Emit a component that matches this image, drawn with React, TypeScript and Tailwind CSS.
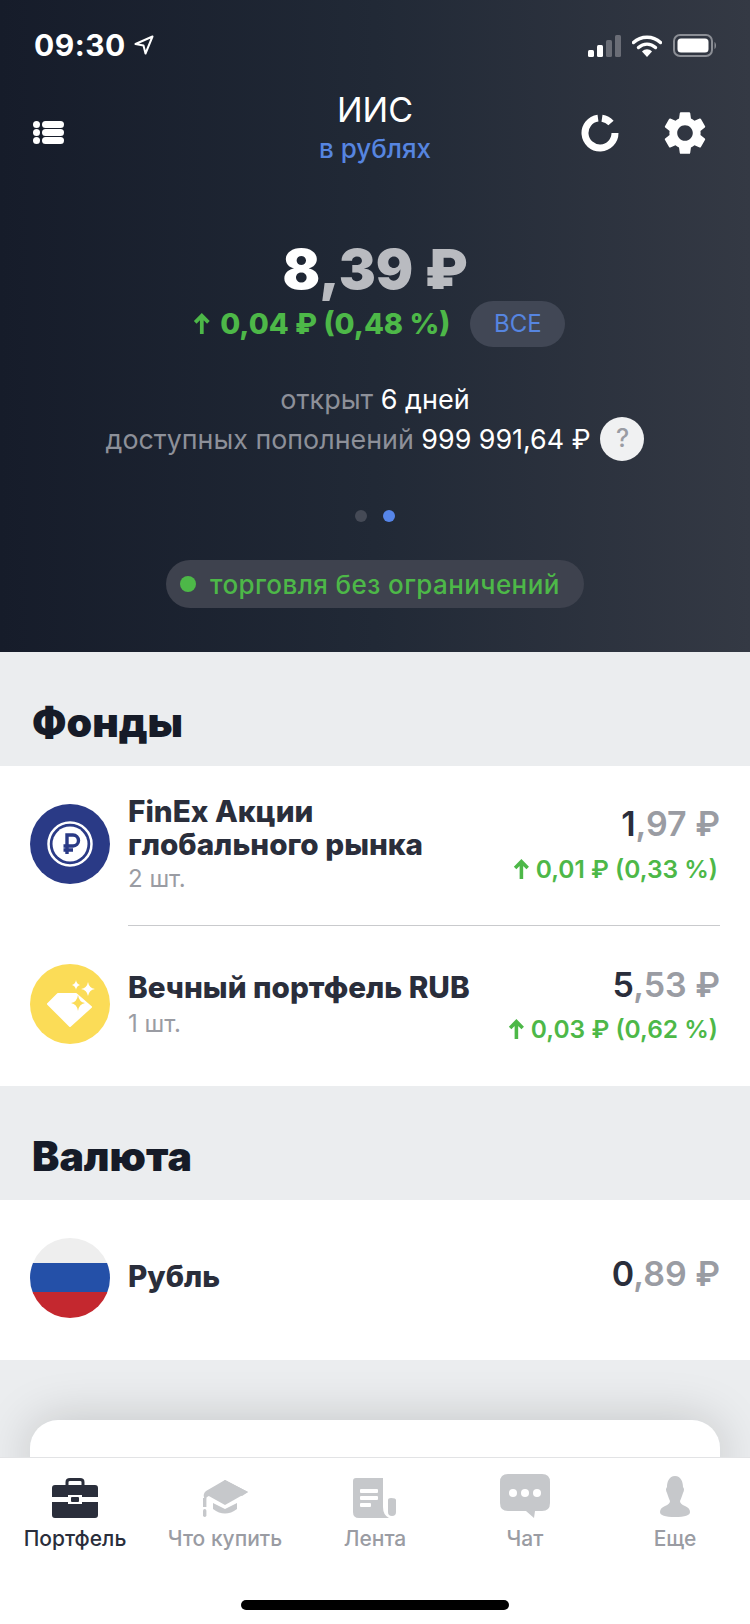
import { MdSettings } from "react-icons/md";

const FONT = "font-['Inter','Noto_Sans',sans-serif]";

function StatusBar() {
  return (
    <div className="flex h-[90px] items-start justify-between pl-[34px] pr-[33px] pt-[31px]">
      <div className="flex items-center gap-[8px]">
        <span className="text-[30px] font-bold leading-[28px] tracking-[0.5px] text-white">09:30</span>
        <svg width="20" height="20" viewBox="0 0 20 20" fill="none">
          <path d="M18.5 1.5 L1.5 9 L9.5 10.5 L11.5 18.5 Z" stroke="white" strokeWidth="2" strokeLinejoin="round" />
        </svg>
      </div>
      <div className="flex items-center gap-[11px] pt-[3px]">
        <svg width="33" height="22" viewBox="0 0 33 22">
          <rect x="0" y="15" width="6" height="7" rx="1.5" fill="white" />
          <rect x="9" y="10" width="6" height="12" rx="1.5" fill="white" />
          <rect x="18" y="5" width="6" height="17" rx="1.5" fill="#6a6d76" />
          <rect x="27" y="0" width="6" height="22" rx="1.5" fill="#6a6d76" />
        </svg>
        <svg width="30" height="22" viewBox="0 0 30 22" fill="none">
          <path d="M1.5 7.5 C9 0.5 21 0.5 28.5 7.5" stroke="white" strokeWidth="3.4" strokeLinecap="round" />
          <path d="M6.5 12.5 C11.5 8 18.5 8 23.5 12.5" stroke="white" strokeWidth="3.4" strokeLinecap="round" />
          <path d="M10 16.5 C13 13.5 17 13.5 20 16.5 L15 22 Z" fill="white" />
        </svg>
        <svg width="44" height="23" viewBox="0 0 44 23" fill="none">
          <rect x="1" y="1" width="38" height="21" rx="6" stroke="#8b8e95" strokeWidth="2" />
          <rect x="4.5" y="4.5" width="31" height="14" rx="3.5" fill="white" />
          <path d="M41.5 8 C43.5 9 43.5 14 41.5 15 Z" fill="#8b8e95" />
        </svg>
      </div>
    </div>
  );
}

function TopBar() {
  return (
    <div className="relative flex h-[70px] items-start justify-between">
      <svg className="ml-[33px] mt-[31px]" width="31" height="23" viewBox="0 0 31 23" fill="white">
        <circle cx="3.5" cy="3.5" r="3.5" />
        <circle cx="3.5" cy="11.5" r="3.5" />
        <circle cx="3.5" cy="19.5" r="3.5" />
        <rect x="9" y="0" width="22" height="7" rx="3.5" />
        <rect x="9" y="8" width="22" height="7" rx="3.5" />
        <rect x="9" y="16" width="22" height="7" rx="3.5" />
      </svg>
      <div className="absolute inset-x-0 top-0 flex flex-col items-center">
        <span className="text-[34px] leading-[40px] text-white">ИИС</span>
        <span className="text-[26px] font-medium leading-[38px] text-[#5685e0]">в рублях</span>
      </div>
      <div className="mr-[44px] mt-[22px] flex items-center gap-[45px]">
        <svg width="38" height="38" viewBox="0 0 38 38" fill="none">
          <path d="M21 4.2 A15 15 0 0 1 30 9" stroke="white" strokeWidth="7" />
          <path d="M34 19 A15 15 0 1 1 17 4.1" stroke="white" strokeWidth="7" />
        </svg>
        <MdSettings size={52} color="white" className="-mx-[5px] -my-[5px]" />
      </div>
    </div>
  );
}

function Balance() {
  return (
    <div className="flex flex-col items-center">
      <div className="mt-[78px] text-[55.5px] font-black leading-[62px] text-[#b9bbc0]">
        <span className="text-white">8</span>,39 ₽
      </div>
      <div className="ml-[8px] mt-[1px] flex h-[46px] items-center gap-[20px]">
        <span className="flex items-center gap-[10px] text-[29px] font-extrabold text-[#4db848]">
          <ArrowUp size={22} />
          0,04 ₽ (0,48 %)
        </span>
        <span className="flex h-[46px] w-[95px] items-center justify-center rounded-full bg-[#414755] text-[24px] text-[#5685e0]">
          ВСЕ
        </span>
      </div>
      <div className="mt-[35px] text-[27px] leading-[35px] text-[#8d9099]">
        открыт <span className="text-white">6 дней</span>
      </div>
      <div className="flex h-[44px] items-center gap-[10px] text-[26.85px] text-[#8d9099]">
        <span>
          доступных пополнений <span className="text-white">999 991,64 ₽</span>
        </span>
        <span className="flex h-[44px] w-[44px] items-center justify-center rounded-full bg-[#f0f1f2] text-[25px] font-medium text-[#9a9ca3]">
          ?
        </span>
      </div>
      <div className="mt-[49px] flex items-center gap-[16px]">
        <span className="h-[12px] w-[12px] rounded-full bg-[#454a56]" />
        <span className="h-[12px] w-[12px] rounded-full bg-[#5685e8]" />
      </div>
      <div className="mt-[38px] flex h-[48px] w-[418px] items-center gap-[14px] rounded-full bg-[#3e424e] pl-[14px]">
        <span className="h-[16px] w-[16px] rounded-full bg-[#4db848]" />
        <span className="text-[26px] font-medium tracking-[0.4px] text-[#4db848]">торговля без ограничений</span>
      </div>
    </div>
  );
}

function ArrowUp({ size }: { size: number }) {
  return (
    <svg width={size * 0.8} height={size} viewBox="0 0 16 20" fill="none">
      <path d="M8 19 V3 M2 8.5 L8 2.5 L14 8.5" stroke="#4db848" strokeWidth="3.4" />
    </svg>
  );
}

function SectionTitle({ children }: { children: string }) {
  return (
    <div className="flex h-[114px] items-end bg-[#ebedef] pb-[22px] pl-[32px]">
      <h2 className="text-[41px] font-black leading-[44px] text-[#161b28]">{children}</h2>
    </div>
  );
}

function Price({ whole, rest }: { whole: string; rest: string }) {
  return (
    <div className="text-[34px] font-semibold leading-[40px] text-[#9a9ca3]">
      <span className="text-[#2a2e3b]">{whole}</span>
      {rest}
    </div>
  );
}

function Change({ text }: { text: string }) {
  return (
    <div className="flex items-center gap-[6px] pr-[2px] text-[24.5px] font-semibold leading-[30px] text-[#4db848]">
      <ArrowUp size={21} />
      {text}
    </div>
  );
}

function FinexLogo() {
  return (
    <svg width="80" height="80" viewBox="0 0 80 80" className="shrink-0">
      <circle cx="40" cy="40" r="40" fill="#2a3a86" />
      <circle cx="40" cy="40" r="21.5" fill="none" stroke="white" strokeWidth="2.5" />
      <circle cx="40" cy="40" r="17.5" fill="white" />
      <path d="M37 50 V31 H43 A5.5 5.5 0 0 1 43 42 H33.5 M33.5 46 H43" fill="none" stroke="#2a3a86" strokeWidth="3.4" />
    </svg>
  );
}

function DiamondLogo() {
  return (
    <svg width="80" height="80" viewBox="0 0 80 80" className="shrink-0">
      <circle cx="40" cy="40" r="40" fill="#fbdc57" />
      <path d="M28 30 H46 L61 43 L40 62 L18 40 Z" fill="white" stroke="white" strokeWidth="2" strokeLinejoin="round" />
      <path d="M48 31 Q49 38 55 39 Q49 40 48 47 Q47 40 41 39 Q47 38 48 31 Z" fill="#fbdc57" />
      <path d="M58 18 Q59 24 65 25 Q59 26 58 32 Q57 26 51 25 Q57 24 58 18 Z" fill="white" />
      <path d="M46 16 Q46.5 20 50 21 Q46.5 22 46 26 Q45.5 22 42 21 Q45.5 20 46 16 Z" fill="white" />
    </svg>
  );
}

function FlagLogo() {
  return (
    <div className="flex h-[80px] w-[80px] shrink-0 flex-col overflow-hidden rounded-full">
      <div className="h-[25px] bg-[#eeeeee]" />
      <div className="h-[29px] bg-[#2450a8]" />
      <div className="flex-1 bg-[#c4282f]" />
    </div>
  );
}

function Funds() {
  return (
    <div className="h-[320px] bg-white pl-[30px] pr-[30px]">
      <div className="flex h-[160px] gap-[18px] pt-[38px]">
        <FinexLogo />
        <div className="flex flex-1 justify-between border-b border-[#c9cacd]">
          <div className="-mt-[9px]">
            <div className="text-[29.7px] font-extrabold leading-[33px] text-[#2a2e3b]">
              FinEx Акции
              <br />
              глобального рынка
            </div>
            <div className="mt-[2px] text-[24px] leading-[32px] text-[#9a9ca3]">2 шт.</div>
          </div>
          <div className="flex flex-col items-end gap-[10px]">
            <Price whole="1" rest=",97 ₽" />
            <Change text="0,01 ₽ (0,33 %)" />
          </div>
        </div>
      </div>
      <div className="flex gap-[18px] pt-[38px]">
        <DiamondLogo />
        <div className="flex flex-1 justify-between">
          <div className="pt-[7px]">
            <div className="text-[29.7px] font-extrabold leading-[33px] text-[#2a2e3b]">Вечный портфель RUB</div>
            <div className="mt-[4px] text-[24px] leading-[32px] text-[#9a9ca3]">1 шт.</div>
          </div>
          <div className="flex flex-col items-end gap-[9px] pt-[1px]">
            <Price whole="5" rest=",53 ₽" />
            <Change text="0,03 ₽ (0,62 %)" />
          </div>
        </div>
      </div>
    </div>
  );
}

function Currency() {
  return (
    <div className="flex h-[160px] items-start gap-[18px] bg-white px-[30px] pt-[38px]">
      <FlagLogo />
      <div className="flex flex-1 items-start justify-between pt-[16px]">
        <span className="pt-[3px] text-[29.7px] font-extrabold leading-[38px] text-[#2a2e3b]">Рубль</span>
        <Price whole="0" rest=",89 ₽" />
      </div>
    </div>
  );
}

const TABS = [
  {
    label: "Портфель",
    active: true,
    icon: (
      <svg width="46" height="40" viewBox="0 0 46 40" fill="#2a2e3b">
        <path d="M15 9 V4 Q15 1.5 18 1.5 H28 Q31 1.5 31 4 V9" fill="none" stroke="#2a2e3b" strokeWidth="3" />
        <path d="M3 7 H43 Q46 7 46 10 V19 H30 V17 H16 V19 H0 V10 Q0 7 3 7 Z" />
        <path d="M0 24 H16 V26 H30 V24 H46 V37 Q46 40 43 40 H3 Q0 40 0 37 Z" />
        <rect x="19" y="19" width="8" height="5" rx="1" />
      </svg>
    ),
  },
  {
    label: "Что купить",
    icon: (
      <svg width="46" height="40" viewBox="0 0 46 40" fill="#c6c8cb">
        <path d="M23 2 L46 14 L40 18 L23 9 L5 19 L3 22 Q0 16 4 13 Z" />
        <path d="M23 2 L46 14 L23 27 L5 17 Z" />
        <path d="M11 25 L23 31 L35 25 V31 Q23 40 11 31 Z" />
        <rect x="1" y="20" width="3.4" height="9" />
        <rect x="1" y="31" width="3.4" height="8" rx="1.7" />
      </svg>
    ),
  },
  {
    label: "Лента",
    icon: (
      <svg width="44" height="40" viewBox="0 0 44 40" fill="#c6c8cb">
        <path d="M3 0 H30 V29 Q30 37 36 40 H6 Q0 40 0 34 V3 Q0 0 3 0 Z" />
        <rect x="7" y="11" width="18" height="4" rx="1" fill="white" />
        <rect x="7" y="18" width="18" height="4" rx="1" fill="white" />
        <rect x="7" y="25" width="11" height="4" rx="1" fill="white" />
        <path d="M35 22 Q35 20 38 20 Q43 20 43 22 V34 Q43 38 39 38 Q35 38 35 34 Z" />
      </svg>
    ),
  },
  {
    label: "Чат",
    icon: (
      <svg width="50" height="44" viewBox="0 0 50 44" fill="#c6c8cb">
        <path d="M8 0 H42 Q50 0 50 8 V29 Q50 37 42 37 H35 L34 44 L26 37 H8 Q0 37 0 29 V8 Q0 0 8 0 Z" />
        <circle cx="13" cy="19" r="4" fill="white" />
        <circle cx="25" cy="19" r="4" fill="white" />
        <circle cx="37" cy="19" r="4" fill="white" />
      </svg>
    ),
  },
  {
    label: "Еще",
    icon: (
      <svg width="30" height="42" viewBox="0 0 30 42" fill="#c6c8cb">
        <path d="M15 0 C21 0 23 6 23 11 Q25 13 23 17 Q21 23 20 25 Q20 28 25 30 Q30 32 30 36 Q30 41 15 41 Q0 41 0 36 Q0 32 5 30 Q10 28 10 25 Q9 23 7 17 Q5 13 7 11 C7 6 9 0 15 0 Z" />
      </svg>
    ),
  },
];

function TabBar() {
  return (
    <div className="h-[167px] border-t border-[#e2e3e5] bg-white">
      <div className="flex">
        {TABS.map((tab) => (
          <div key={tab.label} className="flex w-[150px] flex-col items-center">
            <div className="flex h-[60px] items-end">{tab.icon}</div>
            <span
              className={`mt-[7px] text-[21px] font-medium leading-[28px] ${tab.active ? "text-[#2a2e3b]" : "text-[#9a9ca3]"}`}
            >
              {tab.label}
            </span>
          </div>
        ))}
      </div>
      <div className="mx-auto mt-[47px] h-[10px] w-[268px] rounded-full bg-black" />
    </div>
  );
}

export default function App() {
  return (
    <div className={`flex h-[1624px] w-[750px] flex-col overflow-hidden bg-[#ebedef] ${FONT}`}>
      <header className="h-[652px] bg-gradient-to-r from-[#161c2a] via-[#212936] to-[#343944]">
        <StatusBar />
        <TopBar />
        <Balance />
      </header>
      <SectionTitle>Фонды</SectionTitle>
      <Funds />
      <SectionTitle>Валюта</SectionTitle>
      <Currency />
      <div className="h-[97px] overflow-hidden bg-[#ebedef] px-[30px] pt-[60px]">
        <div className="h-[60px] rounded-t-[28px] bg-white shadow-[0_0_50px_rgba(0,0,0,0.18)]" />
      </div>
      <TabBar />
    </div>
  );
}
